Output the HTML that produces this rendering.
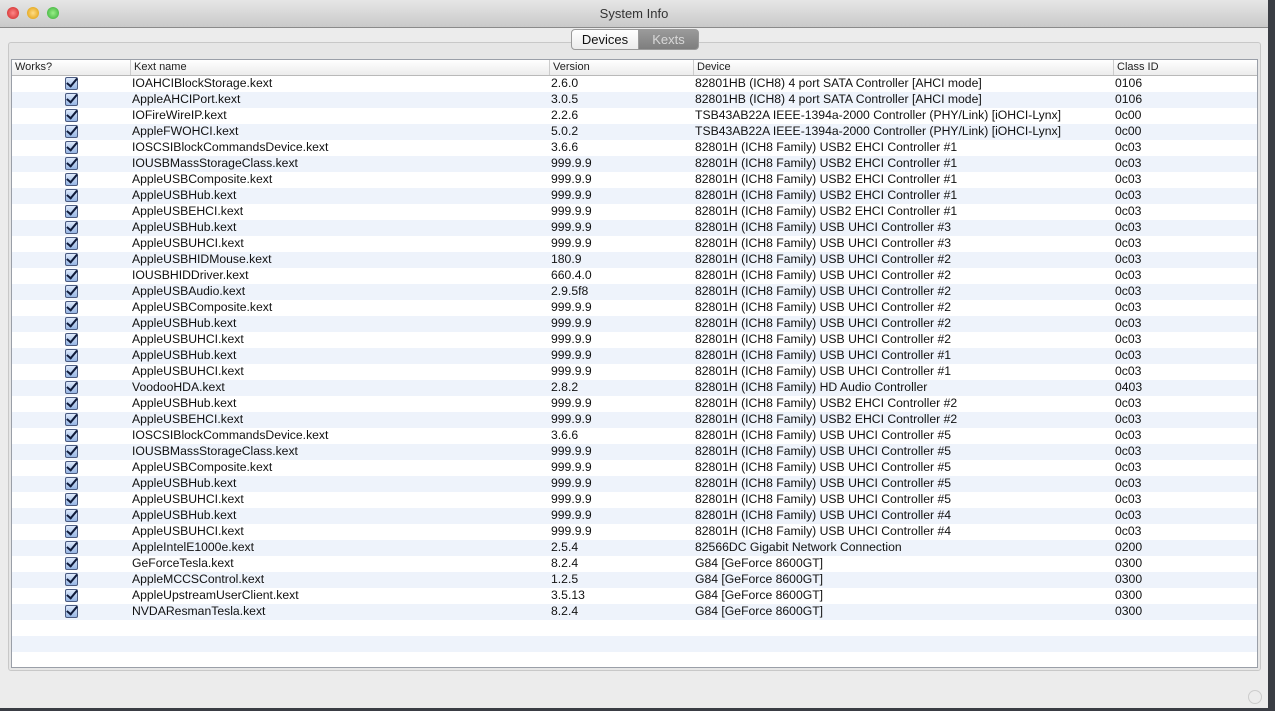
<!DOCTYPE html>
<html><head><meta charset="utf-8"><style>
body{margin:0;width:1275px;height:711px;overflow:hidden;background:#3a3d44;font-family:"Liberation Sans",sans-serif;position:relative}
.win{position:absolute;left:0;top:0;width:1268px;height:708px;background:#ececec}
.tb{position:absolute;left:0;top:0;width:1268px;height:27px;background:linear-gradient(#e6e6e6,#c9c9c9);border-bottom:1px solid #8a8a8a;text-align:center;font-size:13px;line-height:28px;color:#333}
.dot{position:absolute;top:7px;width:12px;height:12px;border-radius:50%}
.seg{position:absolute;top:29px;height:19px;border:1px solid #9a9a9a;font-size:13px;line-height:19px;text-align:center;box-sizing:content-box}
.panel{position:absolute;left:8px;top:42px;width:1251px;height:627px;border:1px solid #c8c8c8;border-radius:3px;background:#e6e6e6}
.tbl{position:absolute;left:11px;top:59px;width:1247px;height:609px;background:#fff;border:1px solid #9a9fa8;box-sizing:border-box;overflow:hidden}
.hd{height:15px;border-bottom:1px solid #b9b9b9;background:linear-gradient(#fff,#ececec);font-size:11px;line-height:15px;color:#222;position:relative}
.hd span,.r span{position:absolute;top:0}
.hd span{border-left:1px solid #ccc;padding-left:3px}
.r{height:16px;position:relative;font-size:12.2px;line-height:15px;color:#111}
.r:nth-child(even){background:#eef3fb}
.cb{position:absolute;left:53px;top:1px;width:11px;height:11px;border:1px solid #4a5a80;border-radius:2px;background:linear-gradient(#dce8fa,#97b6e4)}
.cb:after{content:"";position:absolute;left:3px;top:-2px;width:4px;height:9px;border:solid #0e1a3a;border-width:0 2.5px 2.5px 0;transform:rotate(40deg)}
.c1{left:120px}.c2{left:539px}.c3{left:683px}.c4{left:1103px}
</style></head><body>
<div class="win">
<div class="tb">System Info
<div class="dot" style="left:7px;background:radial-gradient(#f88,#c22)"></div>
<div class="dot" style="left:27px;background:radial-gradient(#fd8,#d90)"></div>
<div class="dot" style="left:47px;background:radial-gradient(#9e8,#3a3)"></div>
</div>
<div class="panel"></div>
<div class="seg" style="left:571px;width:66px;background:linear-gradient(#fff,#ececec);border-radius:4px 0 0 4px;color:#111">Devices</div>
<div class="seg" style="left:638px;width:59px;background:linear-gradient(#9a9a9a,#7e7e7e);border-radius:0 4px 4px 0;color:#d8d8d8">Kexts</div>
<div class="tbl">
<div class="hd"><span style="left:0;border:0">Works?</span><span class="c1" style="left:118px">Kext name</span><span style="left:537px">Version</span><span style="left:681px">Device</span><span style="left:1101px">Class ID</span></div>
<div>
<div class="r"><i class="cb"></i><span class="c1">IOAHCIBlockStorage.kext</span><span class="c2">2.6.0</span><span class="c3">82801HB (ICH8) 4 port SATA Controller [AHCI mode]</span><span class="c4">0106</span></div>
<div class="r"><i class="cb"></i><span class="c1">AppleAHCIPort.kext</span><span class="c2">3.0.5</span><span class="c3">82801HB (ICH8) 4 port SATA Controller [AHCI mode]</span><span class="c4">0106</span></div>
<div class="r"><i class="cb"></i><span class="c1">IOFireWireIP.kext</span><span class="c2">2.2.6</span><span class="c3">TSB43AB22A IEEE-1394a-2000 Controller (PHY/Link) [iOHCI-Lynx]</span><span class="c4">0c00</span></div>
<div class="r"><i class="cb"></i><span class="c1">AppleFWOHCI.kext</span><span class="c2">5.0.2</span><span class="c3">TSB43AB22A IEEE-1394a-2000 Controller (PHY/Link) [iOHCI-Lynx]</span><span class="c4">0c00</span></div>
<div class="r"><i class="cb"></i><span class="c1">IOSCSIBlockCommandsDevice.kext</span><span class="c2">3.6.6</span><span class="c3">82801H (ICH8 Family) USB2 EHCI Controller #1</span><span class="c4">0c03</span></div>
<div class="r"><i class="cb"></i><span class="c1">IOUSBMassStorageClass.kext</span><span class="c2">999.9.9</span><span class="c3">82801H (ICH8 Family) USB2 EHCI Controller #1</span><span class="c4">0c03</span></div>
<div class="r"><i class="cb"></i><span class="c1">AppleUSBComposite.kext</span><span class="c2">999.9.9</span><span class="c3">82801H (ICH8 Family) USB2 EHCI Controller #1</span><span class="c4">0c03</span></div>
<div class="r"><i class="cb"></i><span class="c1">AppleUSBHub.kext</span><span class="c2">999.9.9</span><span class="c3">82801H (ICH8 Family) USB2 EHCI Controller #1</span><span class="c4">0c03</span></div>
<div class="r"><i class="cb"></i><span class="c1">AppleUSBEHCI.kext</span><span class="c2">999.9.9</span><span class="c3">82801H (ICH8 Family) USB2 EHCI Controller #1</span><span class="c4">0c03</span></div>
<div class="r"><i class="cb"></i><span class="c1">AppleUSBHub.kext</span><span class="c2">999.9.9</span><span class="c3">82801H (ICH8 Family) USB UHCI Controller #3</span><span class="c4">0c03</span></div>
<div class="r"><i class="cb"></i><span class="c1">AppleUSBUHCI.kext</span><span class="c2">999.9.9</span><span class="c3">82801H (ICH8 Family) USB UHCI Controller #3</span><span class="c4">0c03</span></div>
<div class="r"><i class="cb"></i><span class="c1">AppleUSBHIDMouse.kext</span><span class="c2">180.9</span><span class="c3">82801H (ICH8 Family) USB UHCI Controller #2</span><span class="c4">0c03</span></div>
<div class="r"><i class="cb"></i><span class="c1">IOUSBHIDDriver.kext</span><span class="c2">660.4.0</span><span class="c3">82801H (ICH8 Family) USB UHCI Controller #2</span><span class="c4">0c03</span></div>
<div class="r"><i class="cb"></i><span class="c1">AppleUSBAudio.kext</span><span class="c2">2.9.5f8</span><span class="c3">82801H (ICH8 Family) USB UHCI Controller #2</span><span class="c4">0c03</span></div>
<div class="r"><i class="cb"></i><span class="c1">AppleUSBComposite.kext</span><span class="c2">999.9.9</span><span class="c3">82801H (ICH8 Family) USB UHCI Controller #2</span><span class="c4">0c03</span></div>
<div class="r"><i class="cb"></i><span class="c1">AppleUSBHub.kext</span><span class="c2">999.9.9</span><span class="c3">82801H (ICH8 Family) USB UHCI Controller #2</span><span class="c4">0c03</span></div>
<div class="r"><i class="cb"></i><span class="c1">AppleUSBUHCI.kext</span><span class="c2">999.9.9</span><span class="c3">82801H (ICH8 Family) USB UHCI Controller #2</span><span class="c4">0c03</span></div>
<div class="r"><i class="cb"></i><span class="c1">AppleUSBHub.kext</span><span class="c2">999.9.9</span><span class="c3">82801H (ICH8 Family) USB UHCI Controller #1</span><span class="c4">0c03</span></div>
<div class="r"><i class="cb"></i><span class="c1">AppleUSBUHCI.kext</span><span class="c2">999.9.9</span><span class="c3">82801H (ICH8 Family) USB UHCI Controller #1</span><span class="c4">0c03</span></div>
<div class="r"><i class="cb"></i><span class="c1">VoodooHDA.kext</span><span class="c2">2.8.2</span><span class="c3">82801H (ICH8 Family) HD Audio Controller</span><span class="c4">0403</span></div>
<div class="r"><i class="cb"></i><span class="c1">AppleUSBHub.kext</span><span class="c2">999.9.9</span><span class="c3">82801H (ICH8 Family) USB2 EHCI Controller #2</span><span class="c4">0c03</span></div>
<div class="r"><i class="cb"></i><span class="c1">AppleUSBEHCI.kext</span><span class="c2">999.9.9</span><span class="c3">82801H (ICH8 Family) USB2 EHCI Controller #2</span><span class="c4">0c03</span></div>
<div class="r"><i class="cb"></i><span class="c1">IOSCSIBlockCommandsDevice.kext</span><span class="c2">3.6.6</span><span class="c3">82801H (ICH8 Family) USB UHCI Controller #5</span><span class="c4">0c03</span></div>
<div class="r"><i class="cb"></i><span class="c1">IOUSBMassStorageClass.kext</span><span class="c2">999.9.9</span><span class="c3">82801H (ICH8 Family) USB UHCI Controller #5</span><span class="c4">0c03</span></div>
<div class="r"><i class="cb"></i><span class="c1">AppleUSBComposite.kext</span><span class="c2">999.9.9</span><span class="c3">82801H (ICH8 Family) USB UHCI Controller #5</span><span class="c4">0c03</span></div>
<div class="r"><i class="cb"></i><span class="c1">AppleUSBHub.kext</span><span class="c2">999.9.9</span><span class="c3">82801H (ICH8 Family) USB UHCI Controller #5</span><span class="c4">0c03</span></div>
<div class="r"><i class="cb"></i><span class="c1">AppleUSBUHCI.kext</span><span class="c2">999.9.9</span><span class="c3">82801H (ICH8 Family) USB UHCI Controller #5</span><span class="c4">0c03</span></div>
<div class="r"><i class="cb"></i><span class="c1">AppleUSBHub.kext</span><span class="c2">999.9.9</span><span class="c3">82801H (ICH8 Family) USB UHCI Controller #4</span><span class="c4">0c03</span></div>
<div class="r"><i class="cb"></i><span class="c1">AppleUSBUHCI.kext</span><span class="c2">999.9.9</span><span class="c3">82801H (ICH8 Family) USB UHCI Controller #4</span><span class="c4">0c03</span></div>
<div class="r"><i class="cb"></i><span class="c1">AppleIntelE1000e.kext</span><span class="c2">2.5.4</span><span class="c3">82566DC Gigabit Network Connection</span><span class="c4">0200</span></div>
<div class="r"><i class="cb"></i><span class="c1">GeForceTesla.kext</span><span class="c2">8.2.4</span><span class="c3">G84 [GeForce 8600GT]</span><span class="c4">0300</span></div>
<div class="r"><i class="cb"></i><span class="c1">AppleMCCSControl.kext</span><span class="c2">1.2.5</span><span class="c3">G84 [GeForce 8600GT]</span><span class="c4">0300</span></div>
<div class="r"><i class="cb"></i><span class="c1">AppleUpstreamUserClient.kext</span><span class="c2">3.5.13</span><span class="c3">G84 [GeForce 8600GT]</span><span class="c4">0300</span></div>
<div class="r"><i class="cb"></i><span class="c1">NVDAResmanTesla.kext</span><span class="c2">8.2.4</span><span class="c3">G84 [GeForce 8600GT]</span><span class="c4">0300</span></div>
<div class="r"></div><div class="r"></div><div class="r"></div>
</div>
</div>
<div style="position:absolute;left:1248px;top:690px;width:12px;height:12px;border:1px solid #ccc;border-radius:50%"></div>
</div>
</body></html>
